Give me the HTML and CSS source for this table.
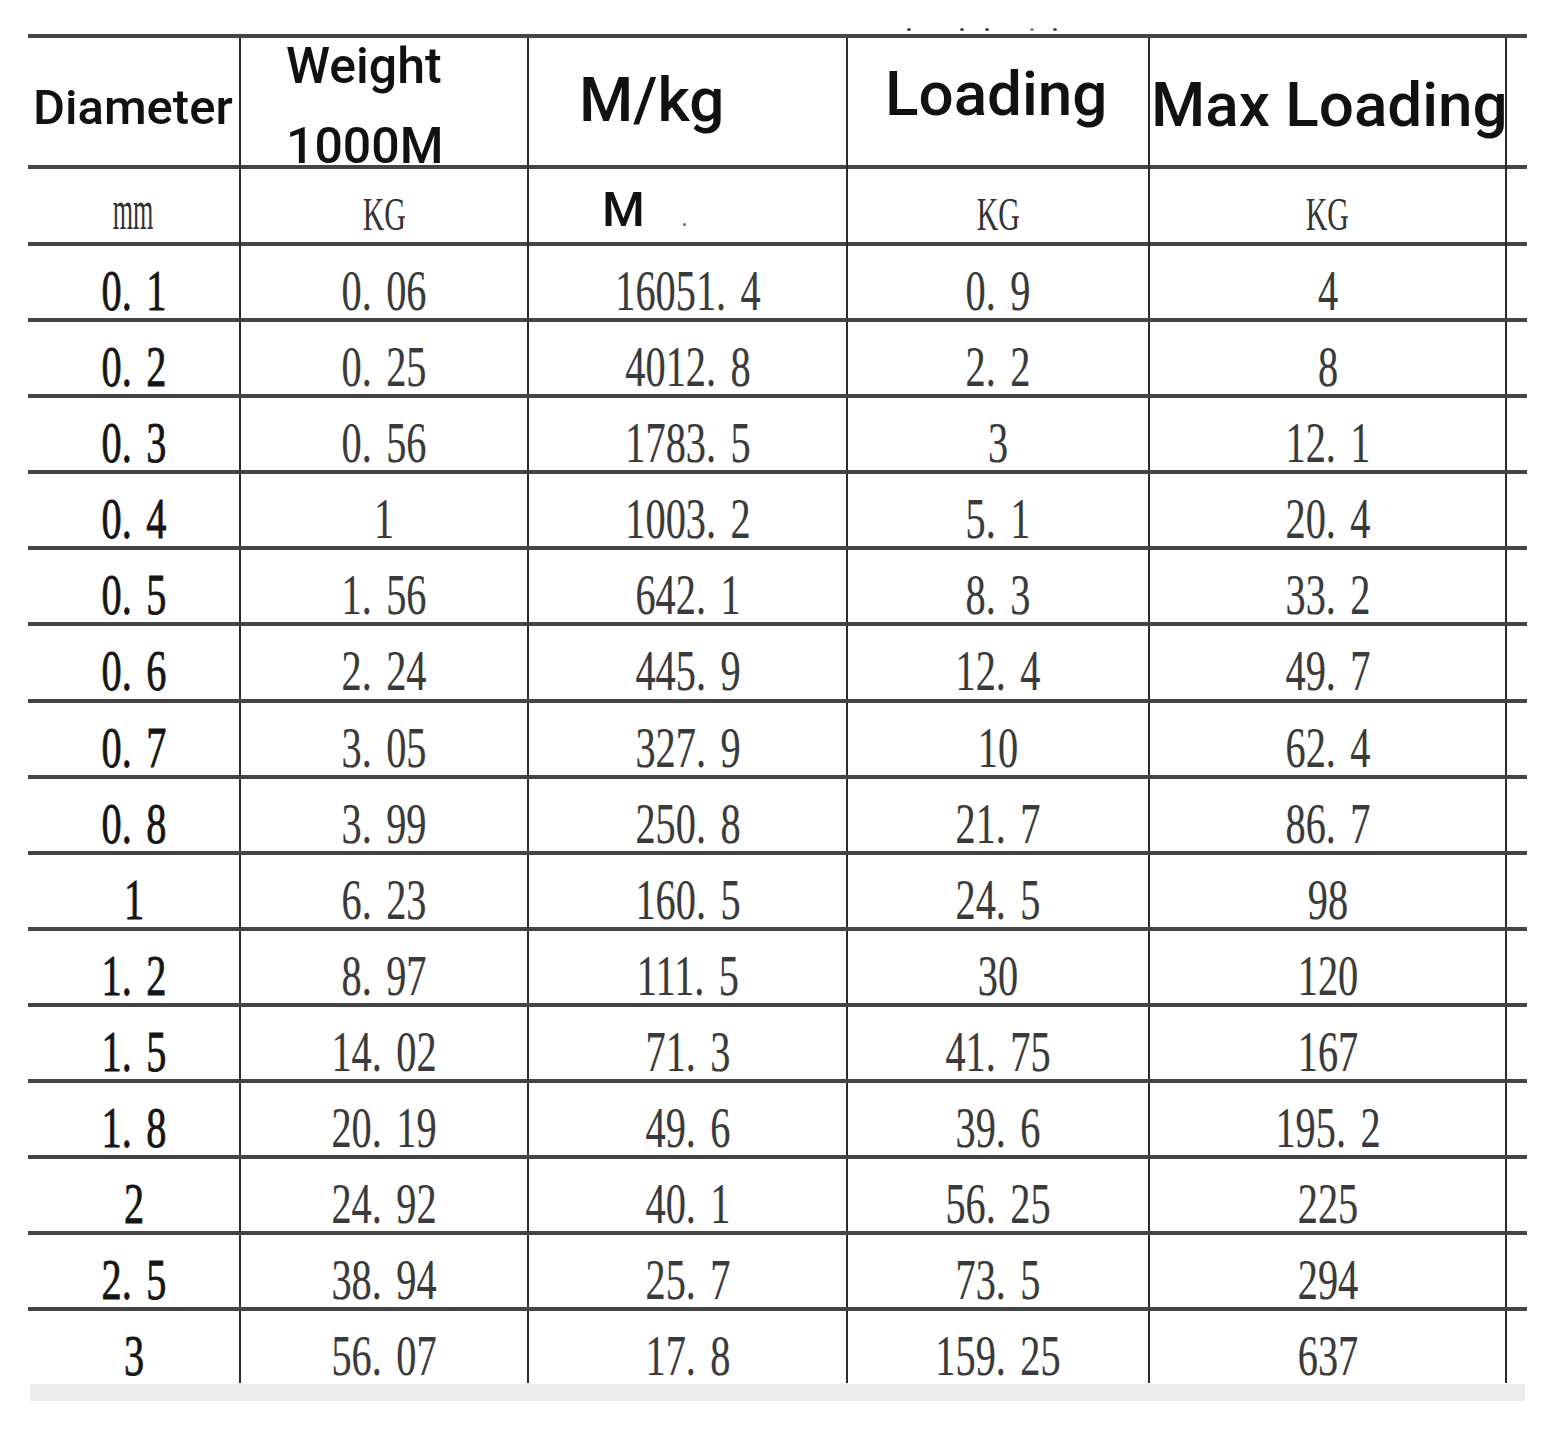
FILE: index.html
```html
<!DOCTYPE html>
<html lang="en">
<head>
    <meta charset="UTF-8">
    <meta name="viewport" content="width=device-width, initial-scale=1.0">
    <title>Fishing Line Specification</title>
    <link rel="stylesheet" href="styles.css">
</head>
<body>
    <div class="page">
        <div class="specks"><i></i><i></i><i></i><i></i><i></i></div>

        <div class="sheet">
            <div class="row head">
                <div class="cell h-diameter">Diameter</div>
                <div class="cell h-weight"><span>Weight</span><span>1000M</span></div>
                <div class="cell h-mkg">M/kg</div>
                <div class="cell h-loading">Loading</div>
                <div class="cell h-max">Max Loading</div>
                <div class="pad"></div>
            </div>
            <div class="row units">
                <div class="cell"><span class="mm">mm</span></div>
                <div class="cell"><span class="kg">KG</span></div>
                <div class="cell u-m">M<b class="speck"></b></div>
                <div class="cell"><span class="kg">KG</span></div>
                <div class="cell"><span class="kg">KG</span></div>
                <div class="pad"></div>
            </div>

            <div class="row"><div class="cell"><span class="n">0. 1</span></div><div class="cell"><span class="n">0. 06</span></div><div class="cell"><span class="n">16051. 4</span></div><div class="cell"><span class="n">0. 9</span></div><div class="cell"><span class="n">4</span></div><div class="pad"></div></div>
            <div class="row"><div class="cell"><span class="n">0. 2</span></div><div class="cell"><span class="n">0. 25</span></div><div class="cell"><span class="n">4012. 8</span></div><div class="cell"><span class="n">2. 2</span></div><div class="cell"><span class="n">8</span></div><div class="pad"></div></div>
            <div class="row"><div class="cell"><span class="n">0. 3</span></div><div class="cell"><span class="n">0. 56</span></div><div class="cell"><span class="n">1783. 5</span></div><div class="cell"><span class="n">3</span></div><div class="cell"><span class="n">12. 1</span></div><div class="pad"></div></div>
            <div class="row"><div class="cell"><span class="n">0. 4</span></div><div class="cell"><span class="n">1</span></div><div class="cell"><span class="n">1003. 2</span></div><div class="cell"><span class="n">5. 1</span></div><div class="cell"><span class="n">20. 4</span></div><div class="pad"></div></div>
            <div class="row"><div class="cell"><span class="n">0. 5</span></div><div class="cell"><span class="n">1. 56</span></div><div class="cell"><span class="n">642. 1</span></div><div class="cell"><span class="n">8. 3</span></div><div class="cell"><span class="n">33. 2</span></div><div class="pad"></div></div>
            <div class="row"><div class="cell"><span class="n">0. 6</span></div><div class="cell"><span class="n">2. 24</span></div><div class="cell"><span class="n">445. 9</span></div><div class="cell"><span class="n">12. 4</span></div><div class="cell"><span class="n">49. 7</span></div><div class="pad"></div></div>
            <div class="row"><div class="cell"><span class="n">0. 7</span></div><div class="cell"><span class="n">3. 05</span></div><div class="cell"><span class="n">327. 9</span></div><div class="cell"><span class="n">10</span></div><div class="cell"><span class="n">62. 4</span></div><div class="pad"></div></div>
            <div class="row"><div class="cell"><span class="n">0. 8</span></div><div class="cell"><span class="n">3. 99</span></div><div class="cell"><span class="n">250. 8</span></div><div class="cell"><span class="n">21. 7</span></div><div class="cell"><span class="n">86. 7</span></div><div class="pad"></div></div>
            <div class="row"><div class="cell"><span class="n">1</span></div><div class="cell"><span class="n">6. 23</span></div><div class="cell"><span class="n">160. 5</span></div><div class="cell"><span class="n">24. 5</span></div><div class="cell"><span class="n">98</span></div><div class="pad"></div></div>
            <div class="row"><div class="cell"><span class="n">1. 2</span></div><div class="cell"><span class="n">8. 97</span></div><div class="cell"><span class="n">111. 5</span></div><div class="cell"><span class="n">30</span></div><div class="cell"><span class="n">120</span></div><div class="pad"></div></div>
            <div class="row"><div class="cell"><span class="n">1. 5</span></div><div class="cell"><span class="n">14. 02</span></div><div class="cell"><span class="n">71. 3</span></div><div class="cell"><span class="n">41. 75</span></div><div class="cell"><span class="n">167</span></div><div class="pad"></div></div>
            <div class="row"><div class="cell"><span class="n">1. 8</span></div><div class="cell"><span class="n">20. 19</span></div><div class="cell"><span class="n">49. 6</span></div><div class="cell"><span class="n">39. 6</span></div><div class="cell"><span class="n">195. 2</span></div><div class="pad"></div></div>
            <div class="row"><div class="cell"><span class="n">2</span></div><div class="cell"><span class="n">24. 92</span></div><div class="cell"><span class="n">40. 1</span></div><div class="cell"><span class="n">56. 25</span></div><div class="cell"><span class="n">225</span></div><div class="pad"></div></div>
            <div class="row"><div class="cell"><span class="n">2. 5</span></div><div class="cell"><span class="n">38. 94</span></div><div class="cell"><span class="n">25. 7</span></div><div class="cell"><span class="n">73. 5</span></div><div class="cell"><span class="n">294</span></div><div class="pad"></div></div>
            <div class="row"><div class="cell"><span class="n">3</span></div><div class="cell"><span class="n">56. 07</span></div><div class="cell"><span class="n">17. 8</span></div><div class="cell"><span class="n">159. 25</span></div><div class="cell"><span class="n">637</span></div><div class="pad"></div></div>
        </div>

        <div class="shadow"></div>
    </div>
</body>
</html>
```

FILE: styles.css
```css
body {
    margin: 0;
    background: #ffffff;
}

.page {
    padding-left: 28px;
}

/* tiny marks left over from the cropped row above */
.specks {
    display: flex;
    height: 34px;
    padding-left: 879px;
    box-sizing: border-box;
    padding-top: 28px;
}

.specks i {
    width: 4px;
    height: 3px;
    background: #444;
    border-radius: 50%;
}

.specks i:nth-child(2) { margin-left: 49px; }
.specks i:nth-child(3) { margin-left: 21px; }
.specks i:nth-child(4) { margin-left: 41px; background: #888; }
.specks i:nth-child(5) { margin-left: 19px; }

.sheet {
    width: 1499px;
}

.row {
    display: grid;
    grid-template-columns: 213px 288px 319px 302px 357px 20px;
    height: 76.1px;
    border-top: 4px solid #444;
    box-sizing: border-box;
}

.cell {
    border-right: 2px solid #2b2b2b;
    text-align: center;
    font-family: "Liberation Serif", serif;
    font-size: 56px;
    line-height: 54px;
    padding-top: 18px;
    color: #3a3a3a;
    white-space: nowrap;
    min-width: 0;
}

.n {
    display: inline-block;
    transform: scaleX(0.72);
    word-spacing: 6px;
    -webkit-text-stroke: 0.2px #3a3a3a;
}

.row .cell:first-child .n {
    color: #151515;
    -webkit-text-stroke: 0.8px #151515;
}

/* header */
.head {
    height: 131px;
}

.head .cell {
    font-family: Roboto, "Noto Sans", sans-serif;
    font-weight: 500;
    color: #111;
    text-align: left;
}

.h-diameter {
    font-size: 49px;
    line-height: 49px;
    padding: 45px 0 0 5px;
}

.head .h-weight {
    display: flex;
    flex-direction: column;
    gap: 30px;
    font-size: 50px;
    line-height: 50px;
    padding: 3px 0 0 45px;
}

.head .h-mkg {
    font-size: 62px;
    line-height: 62px;
    padding: 31px 0 0 50px;
}

.head .h-loading {
    font-size: 62px;
    line-height: 62px;
    padding: 25px 0 0 37px;
}

.head .h-max {
    font-size: 62px;
    line-height: 62px;
    padding: 36px 0 0 1px;
}

/* units row */
.units {
    height: 77px;
}

.units .cell {
    padding-top: 0;
    line-height: 73px;
}

.mm {
    display: inline-block;
    font-size: 58px;
    line-height: 58px;
    padding-top: 12px;
    transform: scaleX(0.45);
    color: #333;
}

.kg {
    display: inline-block;
    font-size: 46px;
    line-height: 46px;
    padding-top: 23px;
    transform: scaleX(0.65);
    color: #333;
}

.units .u-m {
    font-family: Roboto, "Noto Sans", sans-serif;
    font-weight: 500;
    font-size: 49px;
    line-height: 49px;
    color: #111;
    text-align: left;
    padding: 16px 0 0 73px;
}

.speck {
    display: inline-block;
    width: 3px;
    height: 3px;
    margin-left: 38px;
    border-radius: 50%;
    background: #666;
}

.shadow {
    width: 1495px;
    height: 17px;
    margin: 1px 0 0 2px;
    background: #ececec;
}
```
